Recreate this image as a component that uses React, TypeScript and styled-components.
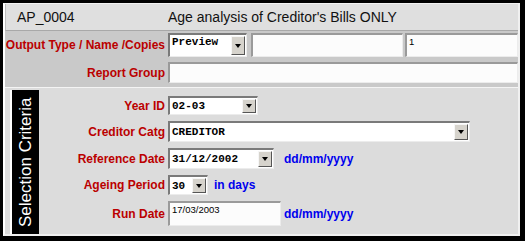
import styled, { createGlobalStyle } from "styled-components";

const GlobalStyle = createGlobalStyle`
  html, body {
    margin: 0;
    padding: 0;
    background: #000;
  }
  * {
    box-sizing: border-box;
  }
`;

const Screen = styled.div`
  width: 525px;
  height: 241px;
  background: #000;
  padding: 3px 5px 5px 3px;
`;

const Frame = styled.div`
  height: 100%;
  background: #dcdcdc;
  border-top: 1px solid #f2f2f2;
  border-left: 2px solid #ffffff;
  border-right: 2px solid #f0f0f0;
  border-bottom: 2px solid #f0f0f0;
  display: flex;
  flex-direction: column;
  font-family: "Liberation Sans", Arial, sans-serif;
`;

const Header = styled.div`
  height: 27px;
  display: flex;
  align-items: center;
  background: #dfdfdf;
  border-left: 1px solid #bdbdbd;
  border-bottom: 1px solid #a8a8a8;
  font-size: 14px;
  color: #111;
`;

const Code = styled.div`
  width: 162px;
  padding-left: 11px;
`;

const Title = styled.div``;

const OutputSection = styled.div`
  background: #c9c9c9;
  padding: 2px 0 4px 0;
  display: flex;
  flex-direction: column;
  gap: 5px;
  border-bottom: 1px solid #f4f4f4;
`;

const Row = styled.div<{ $h: number }>`
  display: flex;
  align-items: center;
  height: ${(p) => p.$h}px;
`;

const Label = styled.div<{ $w: number }>`
  width: ${(p) => p.$w}px;
  flex: none;
  text-align: right;
  padding-right: 3px;
  color: #bb0000;
  font-weight: bold;
  font-size: 12px;
  white-space: nowrap;
`;

const Sunken = styled.div<{ $w?: number; $grow?: boolean }>`
  height: 100%;
  width: ${(p) => (p.$w ? `${p.$w}px` : "auto")};
  flex: ${(p) => (p.$grow ? "1" : "none")};
  background: #fff;
  border-top: 2px solid #7a7a7a;
  border-left: 2px solid #7a7a7a;
  border-right: 1px solid #ececec;
  border-bottom: 1px solid #ececec;
  display: flex;
  align-items: stretch;
`;

const TextBox = styled(Sunken)`
  background: #fcfcfc;
  border-top-color: #9a9a9a;
  border-left-color: #9a9a9a;
  align-items: flex-start;
  padding: 1px 2px;
  font-family: "Liberation Sans", Arial, sans-serif;
  font-size: 9.5px;
  color: #000;
`;

const ComboText = styled.div`
  flex: 1;
  display: flex;
  align-items: center;
  padding-left: 2px;
  font-family: "Liberation Mono", "Courier New", monospace;
  font-weight: bold;
  font-size: 11px;
  color: #000;
  overflow: hidden;
  white-space: nowrap;
`;

const ComboTop = styled(ComboText)`
  align-items: flex-start;
  padding-top: 1px;
`;

const ArrowBtn = styled.div`
  width: 14px;
  margin: 1px;
  background: #d6d3cc;
  border-top: 1px solid #f6f6f6;
  border-left: 1px solid #f6f6f6;
  border-right: 1px solid #555;
  border-bottom: 1px solid #555;
  display: flex;
  align-items: center;
  justify-content: center;
`;

const Tri = styled.span`
  width: 0;
  height: 0;
  border-left: 3px solid transparent;
  border-right: 3px solid transparent;
  border-top: 4px solid #000;
`;

const Spacer = styled.div<{ $w: number }>`
  width: ${(p) => p.$w}px;
  flex: none;
`;

const Selection = styled.div`
  flex: 1;
  display: flex;
  padding: 2px 0 0 5px;
`;

const Band = styled.div`
  width: 27px;
  flex: none;
  background: #000;
  border-right: 2px solid #fff;
  box-sizing: content-box;
  display: flex;
  align-items: center;
  justify-content: center;
  writing-mode: vertical-rl;
  transform: rotate(180deg);
  color: #fff;
  font-size: 17px;
  white-space: nowrap;
`;

const Rows = styled.div`
  flex: 1;
  display: flex;
  flex-direction: column;
  gap: 6px;
  padding-top: 6px;
`;

const Hint = styled.div`
  margin-left: 10px;
  color: #0000ee;
  font-weight: bold;
  font-size: 12px;
  white-space: nowrap;
`;

const Combo = ({ w, value, top }: { w: number; value: string; top?: boolean }) => (
  <Sunken $w={w}>
    {top ? <ComboTop>{value}</ComboTop> : <ComboText>{value}</ComboText>}
    <ArrowBtn>
      <Tri />
    </ArrowBtn>
  </Sunken>
);

const App = () => {
  const labelW = 129;
  return (
    <Screen>
      <GlobalStyle />
      <Frame>
        <Header>
          <Code>AP_0004</Code>
          <Title>Age analysis of Creditor's Bills ONLY</Title>
        </Header>
        <OutputSection>
          <Row $h={24}>
            <Label $w={163}>Output Type / Name /Copies</Label>
            <Combo w={79} value="Preview" top />
            <Spacer $w={4} />
            <TextBox $w={152} />
            <Spacer $w={2} />
            <TextBox $grow>1</TextBox>
          </Row>
          <Row $h={21}>
            <Label $w={163}>Report Group</Label>
            <TextBox $grow />
          </Row>
        </OutputSection>
        <Selection>
          <Band>Selection Criteria</Band>
          <Rows>
            <Row $h={19}>
              <Label $w={labelW}>Year ID</Label>
              <Combo w={90} value="02-03" />
            </Row>
            <Row $h={21}>
              <Label $w={labelW}>Creditor Catg</Label>
              <Combo w={302} value="CREDITOR" />
            </Row>
            <Row $h={21}>
              <Label $w={labelW}>Reference Date</Label>
              <Combo w={106} value="31/12/2002" />
              <Hint>dd/mm/yyyy</Hint>
            </Row>
            <Row $h={20}>
              <Label $w={labelW}>Ageing Period</Label>
              <Combo w={40} value="30" />
              <Hint style={{ marginLeft: 6 }}>in days</Hint>
            </Row>
            <Row $h={25}>
              <Label $w={labelW}>Run Date</Label>
              <TextBox $w={113}>17/03/2003</TextBox>
              <Hint style={{ marginLeft: 3 }}>dd/mm/yyyy</Hint>
            </Row>
          </Rows>
        </Selection>
      </Frame>
    </Screen>
  );
};

export default App;
